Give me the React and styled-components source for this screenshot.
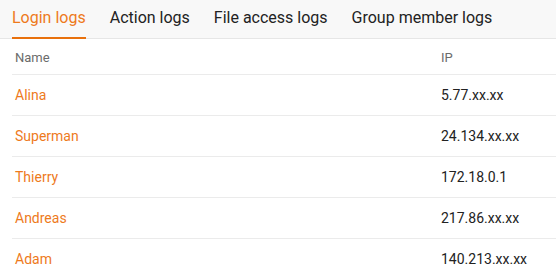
import React from 'react'
import styled, { createGlobalStyle } from 'styled-components'

const GlobalStyle = createGlobalStyle`
  body {
    margin: 0;
    background: #ffffff;
    font-family: Roboto, "Liberation Sans", sans-serif;
  }
`

const Page = styled.div`
  width: 556px;
  height: 276px;
  overflow: hidden;
  background: #fff;
`

// Tabs
const TabBar = styled.div`
  display: flex;
  gap: 24px;
  height: 39px;
  box-sizing: border-box;
  padding: 0 12px;
  background: #f8f8f8;
  border-bottom: 1px solid #e6e6e6;
`

const Tab = styled.div`
  box-sizing: border-box;
  height: 39px;
  margin-bottom: -1px;
  padding-top: 8px;
  font-size: 16px;
  line-height: 19px;
  color: ${p => (p.$active ? '#ee7a1c' : '#222')};
  border-bottom: 2px solid ${p => (p.$active ? '#e8700c' : 'transparent')};
  cursor: pointer;
  white-space: nowrap;
`

// Table
const Table = styled.div`
  padding-left: 12px;
`

const Row = styled.div`
  display: grid;
  grid-template-columns: 426px 1fr;
  border-bottom: 1px solid #ebebeb;
  align-items: center;
  height: ${p => (p.$head ? '36px' : '41px')};
  padding-bottom: ${p => (p.$head ? '0' : '1px')};
  box-sizing: border-box;
`

const HeadCell = styled.div`
  padding: 0 3px;
  font-size: 13px;
  color: #6b6b6b;
  line-height: 15px;
  margin-top: 1px;
`

const NameCell = styled.div`
  padding: 0 3px;
  font-size: 14px;
  line-height: 16px;
  color: #ee7a1c;
`

const IpCell = styled.div`
  padding: 0 3px;
  font-size: 14px;
  line-height: 16px;
  color: #222;
`

const tabs = ['Login logs', 'Action logs', 'File access logs', 'Group member logs']

const logs = [
  { name: 'Alina', ip: '5.77.xx.xx' },
  { name: 'Superman', ip: '24.134.xx.xx' },
  { name: 'Thierry', ip: '172.18.0.1' },
  { name: 'Andreas', ip: '217.86.xx.xx' },
  { name: 'Adam', ip: '140.213.xx.xx' },
]

const App = () => {
  return (
    <Page>
      <GlobalStyle />
      <TabBar>
        {tabs.map((t, i) => (
          <Tab key={t} $active={i === 0}>{t}</Tab>
        ))}
      </TabBar>
      <Table>
        <Row $head>
          <HeadCell>Name</HeadCell>
          <HeadCell>IP</HeadCell>
        </Row>
        {logs.map(l => (
          <Row key={l.name}>
            <NameCell>{l.name}</NameCell>
            <IpCell>{l.ip}</IpCell>
          </Row>
        ))}
      </Table>
    </Page>
  )
}

export default App
